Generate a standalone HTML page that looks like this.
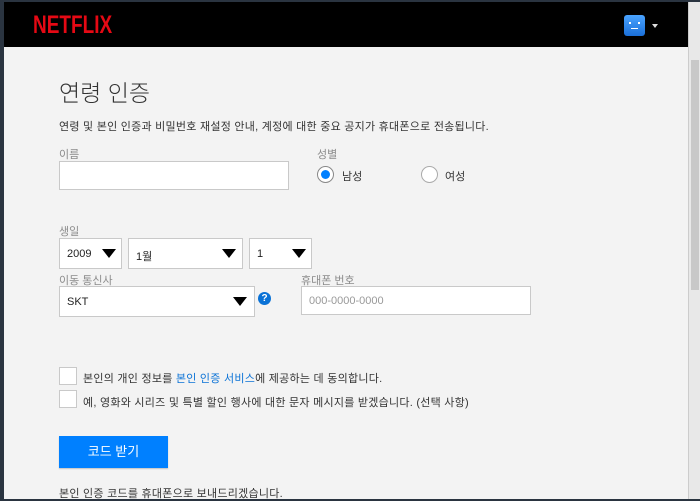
<!DOCTYPE html>
<html><head><meta charset="utf-8"><style>
*{margin:0;padding:0;box-sizing:border-box}
body{width:700px;height:499px;overflow:hidden;background:#2a3440;font-family:"Liberation Sans","Noto Sans CJK KR",sans-serif;position:relative}
.win{position:absolute;left:4px;top:2px;width:696px;height:497px;background:#f3f3f3}
.hdr{position:absolute;left:0;top:0;width:684px;height:45px;background:#000}
.logo{position:absolute;left:29px;top:9px;color:#e50914;font:bold 25px "Liberation Sans",sans-serif;transform:scaleX(.76);transform-origin:left}
.av{position:absolute;left:620px;top:13px;width:21px;height:21px;background:linear-gradient(#4aa3ff,#1a6fd8);border-radius:3px}
.caret{position:absolute;left:648px;top:22px;border:3px solid transparent;border-top:4px solid #ddd}
.sb{position:absolute;left:684px;top:0;width:12px;height:497px;background:#e8e8e8;border-left:1px solid #ccc}
.sb i{position:absolute;left:2px;top:58px;width:8px;height:230px;background:#c8c8c8}
.a{position:absolute;white-space:nowrap}
.lbl{font-size:11px;color:#8c8c8c}
.t{letter-spacing:0.25px}
.box{position:absolute;background:#fff;border:1px solid #c9c9c9}
.tri{position:absolute;border:7px solid transparent;border-top:9px solid #000;border-bottom:0}
.sel{font-size:11px;color:#222}
.rad{position:absolute;width:17px;height:17px;border-radius:50%;background:#fff;border:1px solid #aaa}
</style></head><body>
<div class="win">
<div class="hdr"><div class="logo">NETFLIX</div><div class="av"><i style="position:absolute;left:5px;top:7px;width:2px;height:2px;background:#fff"></i><i style="position:absolute;left:14px;top:7px;width:2px;height:2px;background:#fff"></i><i style="position:absolute;left:7px;top:13px;width:7px;height:1px;background:#fff"></i></div><div class="caret"></div></div>
<div class="sb"><i></i></div>
<div class="a" style="left:55px;top:72px;font-size:23px;color:#333;font-weight:300">연령 인증</div>
<div class="a t" style="left:55px;top:116px;font-size:11px;color:#333">연령 및 본인 인증과 비밀번호 재설정 안내, 계정에 대한 중요 공지가 휴대폰으로 전송됩니다.</div>
<div class="a lbl" style="left:55px;top:144px">이름</div>
<div class="box" style="left:55px;top:159px;width:230px;height:29px"></div>
<div class="a lbl" style="left:313px;top:144px">성별</div>
<div class="rad" style="left:313px;top:164px;border-color:#888"><div style="position:absolute;left:3px;top:3px;width:9px;height:9px;border-radius:50%;background:#0080ff"></div></div>
<div class="a" style="left:338px;top:166px;font-size:11px;color:#333">남성</div>
<div class="rad" style="left:417px;top:164px"></div>
<div class="a" style="left:441px;top:166px;font-size:11px;color:#333">여성</div>
<div class="a lbl" style="left:55px;top:221px">생일</div>
<div class="box" style="left:55px;top:236px;width:63px;height:31px"></div><div class="a sel" style="left:63px;top:246px">2009</div><div class="tri" style="left:98px;top:247px"></div>
<div class="box" style="left:124px;top:236px;width:115px;height:31px"></div><div class="a sel" style="left:132px;top:246px">1월</div><div class="tri" style="left:218px;top:247px"></div>
<div class="box" style="left:245px;top:236px;width:63px;height:31px"></div><div class="a sel" style="left:253px;top:246px">1</div><div class="tri" style="left:288px;top:247px"></div>
<div class="a lbl" style="left:55px;top:270px">이동 통신사</div>
<div class="box" style="left:55px;top:284px;width:196px;height:31px"></div><div class="a sel" style="left:63px;top:294px">SKT</div><div class="tri" style="left:229px;top:295px"></div>
<div class="a" style="left:254px;top:290px;width:13px;height:13px;border-radius:50%;background:#0a72d6;color:#fff;font:bold 10px 'Liberation Sans';text-align:center;line-height:13px">?</div>
<div class="a lbl" style="left:297px;top:270px">휴대폰 번호</div>
<div class="box" style="left:297px;top:284px;width:230px;height:29px"></div>
<div class="a" style="left:305px;top:293px;font-size:11px;color:#999">000-0000-0000</div>
<div class="box" style="left:55px;top:365px;width:18px;height:18px"></div>
<div class="a t" style="left:79px;top:368px;font-size:11px;color:#333">본인의 개인 정보를 <span style="color:#0a72d6">본인 인증 서비스</span>에 제공하는 데 동의합니다.</div>
<div class="box" style="left:55px;top:388px;width:18px;height:18px"></div>
<div class="a t" style="left:79px;top:392px;font-size:11px;color:#333">예, 영화와 시리즈 및 특별 할인 행사에 대한 문자 메시지를 받겠습니다. (선택 사항)</div>
<div class="a" style="left:55px;top:434px;width:109px;height:32px;background:#0080ff;color:#fff;font-size:13px;text-align:center;line-height:32px;box-shadow:0 1px 1px rgba(0,0,0,.2)">코드 받기</div>
<div class="a t" style="left:55px;top:483px;font-size:11px;color:#333">본인 인증 코드를 휴대폰으로 보내드리겠습니다.</div>
</div>
</body></html>
